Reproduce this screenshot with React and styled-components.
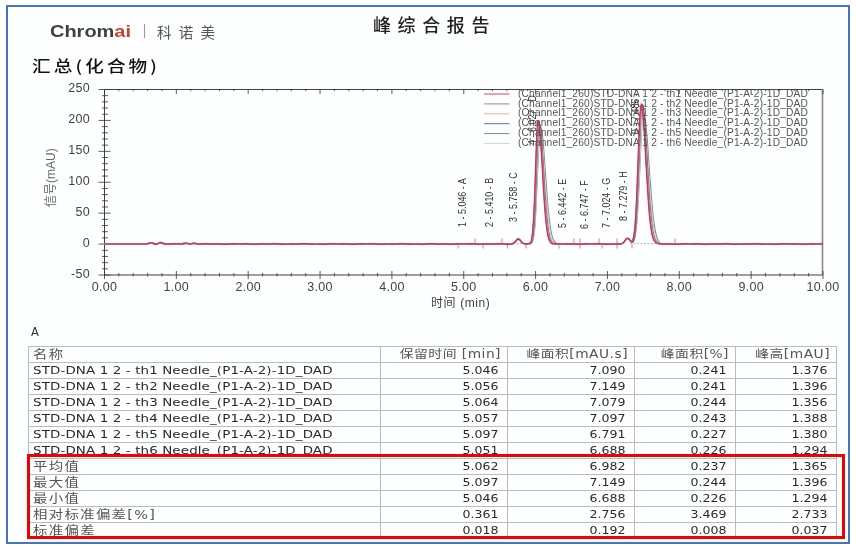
import React from "react";
import styled, { createGlobalStyle } from "styled-components";

const Global = createGlobalStyle`
  html, body { margin: 0; padding: 0; background: #fff; }
  body { width: 856px; height: 549px; overflow: hidden; font-family: "Liberation Sans", "Noto Sans CJK SC", sans-serif; }
`;

const Frame = styled.div`
  box-sizing: border-box;
  width: 844px;
  height: 539px;
  margin: 5px 6px;
  border: 2px solid #4472c4;
  display: flex;
  flex-direction: column;
  background: #fdfefe;
  filter: blur(0.35px);
  & > * { flex: none; }
`;
const Header = styled.header`
  display: grid;
  grid-template-columns: 323px auto;
  height: 38px;
  padding-left: 42px;
`;
const Logo = styled.div`
  display: flex;
  align-items: center;
  height: 22px;
  margin-top: 13px;
  color: #3f3f3f;
`;
const Brand = styled.span`
  display: inline-block;
  width: 82px;
  font: bold 16.5px "Liberation Sans", sans-serif;
  white-space: nowrap;
  transform: scaleX(1.21);
  transform-origin: left;
`;
const BrandAccent = styled.span`
  color: #c8402f;
`;
const LogoBar = styled.span`
  width: 1px;
  height: 14px;
  margin: 0 12px;
  background: #c9897e;
`;
const BrandCn = styled.span`
  font: 14.5px "Noto Sans CJK SC", sans-serif;
  letter-spacing: 7.2px;
  color: #555;
`;
const Title = styled.h1`
  margin: 5px 0 0;
  font: 500 18px/24px "Noto Sans CJK SC", sans-serif;
  letter-spacing: 6.6px;
  color: #222;
`;
const Heading = styled.h2`
  align-self: flex-start;
  margin: 10px 0 1px 24px;
  height: 20px;
  font: 500 15.5px/20px "Noto Sans CJK SC", sans-serif;
  letter-spacing: 2.6px;
  color: #111;
  white-space: nowrap;
  transform: scaleX(1.2);
  transform-origin: left;
`;
const Chart = styled.svg`
  display: block;
  width: 840px;
  height: 240px;
  margin-top: 4px;
`;
const AxisText = styled.text`
  font: 12.5px "Liberation Sans", sans-serif;
  letter-spacing: 0.3px;
  fill: #444;
`;
const AxisTitle = styled.text`
  font: 12px "Liberation Sans", "Noto Sans CJK SC", sans-serif;
  letter-spacing: ${(p) => (p.$tight ? "0" : "0.6px")};
  fill: ${(p) => (p.$tight ? "#666" : "#444")};
`;
const PeakText = styled.text`
  font: 11.5px "Liberation Sans", sans-serif;
  fill: #333;
`;
const LegendText = styled.text`
  font: 10.2px "Liberation Sans", sans-serif;
  letter-spacing: 0.17px;
  fill: #555;
`;
const SectionLabel = styled.div`
  margin: 3px 0 0 23px;
  height: 23px;
  font: 11.5px/18px "DejaVu Sans", sans-serif;
  color: #333;
`;
const TableWrap = styled.div`
  position: relative;
  width: 808px;
  margin-left: 20px;
`;
const Table = styled.table`
  width: 808px;
  table-layout: fixed;
  border-collapse: collapse;
  font-family: "DejaVu Sans", "Noto Sans CJK SC", sans-serif;
  color: #2a2a2a;
`;
const Cell = styled.td`
  box-sizing: border-box;
  height: 16px;
  padding: 0 ${(p) => (p.$head ? "6.5px" : "9px")} 0 3.5px;
  font-weight: normal;
  border: 1px solid #bcbcbc;
  text-align: ${(p) => (p.$name ? "left" : "right")};
  white-space: nowrap;
  overflow: hidden;
`;
/* The source table was squeezed vertically: glyphs are wider than they are tall. */
const Wide = styled.span`
  display: block;
  height: 15px;
  line-height: 15px;
  transform-origin: ${(p) => (p.$name ? "left" : "right")};
  ${(p) =>
    p.$kind === "latin"
      ? `font-size: 11.2px; letter-spacing: 0.1px; transform: scaleX(1.2);`
      : p.$kind === "cjk"
        ? `font-size: 12px; letter-spacing: 1.1px; line-height: 16px; transform: scaleX(1.2); color: #555;`
        : p.$kind === "head"
          ? `font-size: 11.5px; letter-spacing: 0.4px; transform: scaleX(1.2); color: #555;`
          : `font-size: 11px; transform: scaleX(1.14);`}
`;
const Highlight = styled.div`
  position: absolute;
  left: -1px;
  top: 108px;
  width: 818px;
  height: 85px;
  box-sizing: border-box;
  border: 3px solid #f00000;
  pointer-events: none;
`;

const X = (t) => 104.5 + t * 71.85;
const Y = (v) => 244 - v * 0.618;

const traces = [
  { c: "#6f9a5e", h1: 190, h2: 212, d: 0.022, s: 1.12, seed: 1.3 },
  { c: "#d6cfd0", h1: 184, h2: 205, d: 0.015, s: 1.08, seed: 2.1 },
  { c: "#5a55c0", h1: 196, h2: 226, d: 0.004, s: 1.0, seed: 0.7 },
  { c: "#e0a070", h1: 192, h2: 216, d: -0.004, s: 1.02, seed: 3.3 },
  { c: "#a070a8", h1: 198, h2: 222, d: -0.008, s: 0.98, seed: 4.2 },
  { c: "#d8304c", h1: 200, h2: 226, d: -0.012, s: 0.96, seed: 5.1 },
];

const gauss = (t, c, h, sl, sr) => {
  const s = t < c ? sl : sr;
  return h * Math.exp(-((t - c) ** 2) / (2 * s * s));
};

const tracePath = ({ h1, h2, d, s, seed }) => {
  let out = "";
  for (let t = 0; t <= 10; t += 0.01) {
    const v =
      gauss(t, 6.045 + d, h1, 0.036 * s, 0.062 * s) +
      gauss(t, 7.48 + d, h2, 0.044 * s, 0.068 * s) +
      gauss(t, 5.76, 8, 0.035, 0.035) +
      gauss(t, 7.28, 9, 0.035, 0.035) +
      gauss(t, 0.65, 1.6, 0.03, 0.03) +
      gauss(t, 0.78, 2.2, 0.025, 0.025) +
      gauss(t, 1.13, 1.2, 0.03, 0.03) +
      gauss(t, 1.25, 1, 0.03, 0.03) +
      (t > 0.6 ? 0.7 * Math.sin(t * 9 + seed) * Math.sin(t * 23 + seed * 2) : 0);
    out += `${out ? "L" : "M"}${X(t).toFixed(1)} ${Y(v).toFixed(1)}`;
  }
  return out;
};

const range = (n) => Array.from({ length: n }, (_, i) => i);
const xLabels = range(11).map((i) => i);
const yLabels = [250, 200, 150, 100, 50, 0, -50];

const peaks = [
  { t: "1 - 5.046 - A", x: 466, y: 227 },
  { t: "2 - 5.410 - B", x: 493, y: 227 },
  { t: "3 - 5.758 - C", x: 517, y: 222 },
  { t: "4 - 6.027 - D", x: 536, y: 145 },
  { t: "5 - 6.442 - E", x: 566, y: 228 },
  { t: "6 - 6.747 - F", x: 588, y: 229 },
  { t: "7 - 7.024 - G", x: 610, y: 228 },
  { t: "8 - 7.279 - H", x: 627, y: 221 },
  { t: "9 - 7.486 - I", x: 639, y: 134 },
];
const upTicks = [475, 502, 574, 580, 599, 617, 675];
const downTicks = [458, 483, 507.5, 526, 559, 580, 602, 617, 632];

const rows = [
  ["STD-DNA 1 2 - th1 Needle_(P1-A-2)-1D_DAD", "5.046", "7.090", "0.241", "1.376"],
  ["STD-DNA 1 2 - th2 Needle_(P1-A-2)-1D_DAD", "5.056", "7.149", "0.241", "1.396"],
  ["STD-DNA 1 2 - th3 Needle_(P1-A-2)-1D_DAD", "5.064", "7.079", "0.244", "1.356"],
  ["STD-DNA 1 2 - th4 Needle_(P1-A-2)-1D_DAD", "5.057", "7.097", "0.243", "1.388"],
  ["STD-DNA 1 2 - th5 Needle_(P1-A-2)-1D_DAD", "5.097", "6.791", "0.227", "1.380"],
  ["STD-DNA 1 2 - th6 Needle_(P1-A-2)-1D_DAD", "5.051", "6.688", "0.226", "1.294"],
  ["平均值", "5.062", "6.982", "0.237", "1.365"],
  ["最大值", "5.097", "7.149", "0.244", "1.396"],
  ["最小值", "5.046", "6.688", "0.226", "1.294"],
  ["相对标准偏差[%]", "0.361", "2.756", "3.469", "2.733"],
  ["标准偏差", "0.018", "0.192", "0.008", "0.037"],
];
const heads = ["名称", "保留时间 [min]", "峰面积[mAU.s]", "峰面积[%]", "峰高[mAU]"];
const widths = [352, 127, 127, 101, 101];

export default function App() {
  return (
    <>
      <Global />
      <Frame>
        <Header>
          <Logo>
            <Brand>
              Chrom<BrandAccent>ai</BrandAccent>
            </Brand>
            <LogoBar />
            <BrandCn>科诺美</BrandCn>
          </Logo>
          <Title>峰综合报告</Title>
        </Header>
        <Heading>汇总(化合物)</Heading>
        <Chart viewBox="8 80 840 240">
          <path d="M104.5 89.5H822.5V275H104.5Z" fill="none" stroke="#2b2b2b" strokeWidth="0.9" />
          <path d="M822.5 89V275.5" stroke="#888" strokeWidth="1.6" />
          {range(51).map((i) => {
            const x = X(i * 0.2);
            const major = i % 5 === 0;
            return (
              <g key={i}>
                <path d={`M${x} 89.5V${major ? 94 : 91.2}`} stroke="#333" strokeWidth="0.8" />
                <path d={`M${x} ${major ? 271 : 273}V${major ? 279 : 276.5}`} stroke="#333" strokeWidth="0.8" />
              </g>
            );
          })}
          {range(31).map((i) => {
            const y = 89.5 + (i * 185.5) / 30;
            const major = i % 5 === 0;
            return (
              <path
                key={i}
                d={major ? `M98.5 ${y}H110.5` : `M102 ${y}H108`}
                stroke="#333"
                strokeWidth="0.8"
              />
            );
          })}
          {yLabels.map((v, i) => (
            <AxisText key={v} x="90" y={92 + i * 30.95} textAnchor="end">
              {v}
            </AxisText>
          ))}
          {xLabels.map((i) => (
            <AxisText key={i} x={X(i)} y="291" textAnchor="middle">
              {i.toFixed(2)}
            </AxisText>
          ))}
          <AxisTitle x="431" y="306.5">时间 (min)</AxisTitle>
          <AxisTitle $tight transform="translate(55 207) rotate(-90)">信号(mAU)</AxisTitle>

          <path d="M513 243.5H530M551 243.5H562M630 243.5H660" stroke="#999" strokeWidth="0.7" strokeDasharray="2 1.5" />
          {upTicks.map((x) => (
            <path key={x} d={`M${x} 243V238.5`} stroke="#b9545f" strokeWidth="0.7" />
          ))}
          {downTicks.map((x) => (
            <path key={x} d={`M${x} 244V248.5`} stroke="#b9545f" strokeWidth="0.7" />
          ))}
          {traces.map((t) => (
            <path key={t.c} d={tracePath(t)} fill="none" stroke={t.c} strokeWidth="1.2" />
          ))}
          {peaks.map((p) => (
            <PeakText key={p.t} transform={`translate(${p.x} ${p.y}) rotate(-90) scale(0.78 1)`}>
              {p.t}
            </PeakText>
          ))}
          {["#d8304c", "#a070a8", "#e8b090", "#5a55c0", "#5f8f50", "#d6cfd0"].map((c, i) => (
            <g key={c}>
              <path d={`M484 ${94 + i * 9.9}H509.5`} stroke={c} strokeWidth="0.9" />
              <LegendText x="518" y={96.6 + i * 9.9}>
                {`(Channel1_260)STD-DNA 1 2 - th${i + 1} Needle_(P1-A-2)-1D_DAD`}
              </LegendText>
            </g>
          ))}
        </Chart>
        <SectionLabel>A</SectionLabel>
        <TableWrap>
          <Table>
            <colgroup>
              {widths.map((w, i) => (
                <col key={i} width={w} />
              ))}
            </colgroup>
            <thead>
              <tr>
                {heads.map((h, i) => (
                  <Cell as="th" key={h} $head $name={i === 0}>
                    <Wide $name={i === 0} $kind={i === 0 ? "cjk" : "head"}>
                      {h}
                    </Wide>
                  </Cell>
                ))}
              </tr>
            </thead>
            <tbody>
              {rows.map((r, n) => (
                <tr key={r[0]}>
                  {r.map((c, i) => (
                    <Cell key={i} $name={i === 0}>
                      <Wide $name={i === 0} $kind={i > 0 ? "num" : n > 5 ? "cjk" : "latin"}>
                        {c}
                      </Wide>
                    </Cell>
                  ))}
                </tr>
              ))}
            </tbody>
          </Table>
          <Highlight />
        </TableWrap>
      </Frame>
    </>
  );
}
